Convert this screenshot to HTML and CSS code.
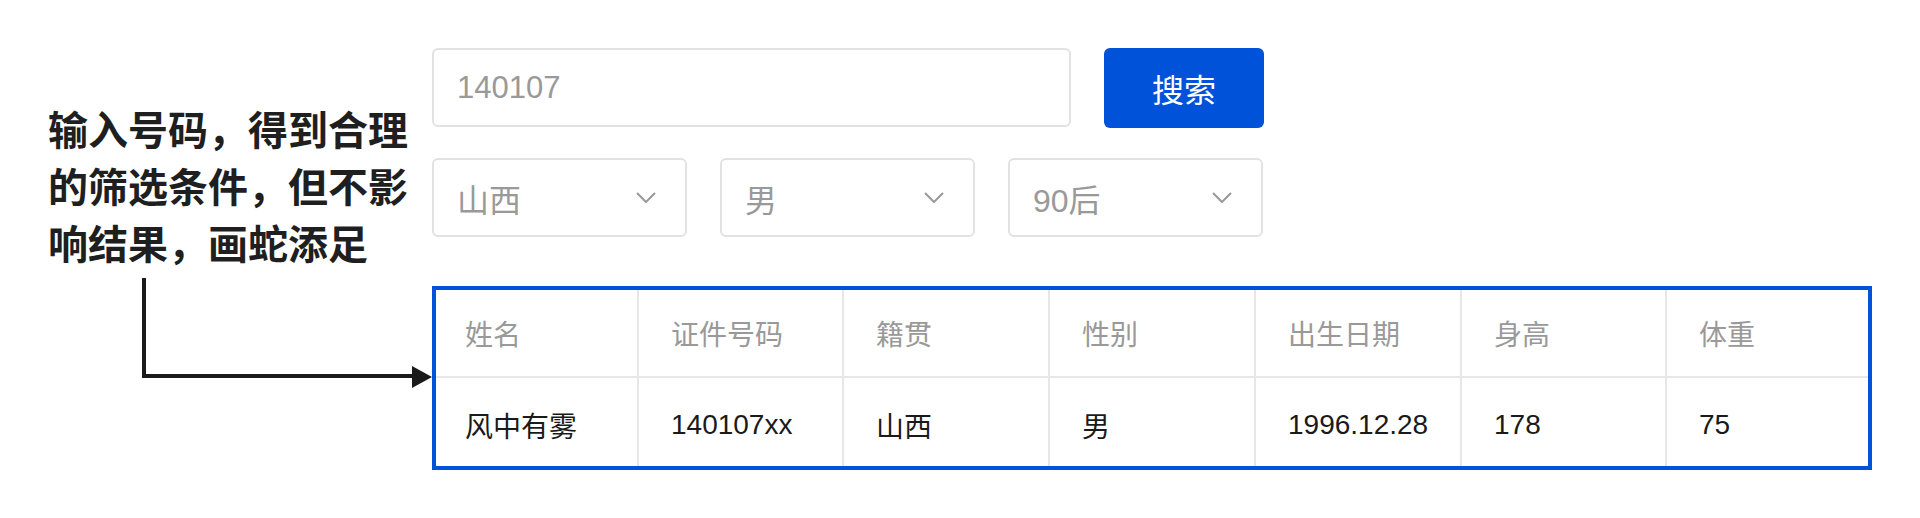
FILE: index.html
```html
<!DOCTYPE html>
<html lang="zh-CN">
<head>
<meta charset="utf-8">
<title>筛选示意</title>
<link rel="stylesheet" href="styles.css">
</head>
<body>
<div class="page">
  <aside class="note">
    <p class="note-text">输入号码，得到合理的筛选条件，但不影响结果，画蛇添足</p>
    <svg class="note-arrow" width="292" height="112" viewBox="0 0 292 112">
      <path d="M4 0 V98 H274" fill="none" stroke="#1a1a1a" stroke-width="4" stroke-linejoin="miter"/>
      <polygon points="272,88 292,99 272,110" fill="#1a1a1a"/>
    </svg>
  </aside>
  <main class="panel">
    <div class="search-row">
      <input class="search-input" type="text" value="140107">
      <button class="search-btn" type="button">搜索</button>
    </div>
    <div class="filter-row">
      <div class="select"><span>山西</span><svg class="chev" width="20" height="11" viewBox="0 0 20 11"><path d="M1 1 L10 10 L19 1" fill="none" stroke="#999" stroke-width="2"/></svg></div>
      <div class="select"><span>男</span><svg class="chev" width="20" height="11" viewBox="0 0 20 11"><path d="M1 1 L10 10 L19 1" fill="none" stroke="#999" stroke-width="2"/></svg></div>
      <div class="select"><span>90后</span><svg class="chev" width="20" height="11" viewBox="0 0 20 11"><path d="M1 1 L10 10 L19 1" fill="none" stroke="#999" stroke-width="2"/></svg></div>
    </div>
    <table class="result">
      <colgroup>
        <col class="c-first"><col class="c-mid"><col class="c-wide"><col class="c-wide"><col class="c-wide"><col class="c-mid"><col class="c-last">
      </colgroup>
      <thead>
        <tr><th>姓名</th><th>证件号码</th><th>籍贯</th><th>性别</th><th>出生日期</th><th>身高</th><th>体重</th></tr>
      </thead>
      <tbody>
        <tr><td>风中有雾</td><td>140107xx</td><td>山西</td><td>男</td><td>1996.12.28</td><td>178</td><td>75</td></tr>
      </tbody>
    </table>
  </main>
</div>
</body>
</html>
```

FILE: styles.css
```css
* { box-sizing: border-box; }
html, body { margin: 0; padding: 0; background: #fff; }
body { width: 1920px; height: 518px; overflow: hidden; }

.page {
  display: flex;
  align-items: flex-start;
}

.note {
  width: 432px;
  flex: none;
  padding: 100px 0 0 48px;
}
.note-text {
  margin: 0;
  width: 362px;
  font-family: "Noto Sans CJK SC", sans-serif;
  font-weight: 700;
  font-size: 40px;
  line-height: 57px;
  color: #1f1f1f;
}
.note-arrow {
  display: block;
  margin: 7px 0 0 92px;
}

.panel {
  padding-top: 48px;
  font-family: "Liberation Sans", "Noto Sans CJK SC", sans-serif;
}

.search-row {
  display: flex;
  gap: 33px;
}
.search-input {
  width: 639px;
  height: 79px;
  border: 2px solid #e2e2e2;
  border-radius: 6px;
  padding: 0 23px;
  font-family: inherit;
  font-size: 31px;
  color: #999;
  outline: none;
  background: #fff;
}
.search-btn {
  width: 160px;
  height: 80px;
  border: none;
  border-radius: 6px;
  background: #0052d9;
  color: #fff;
  font-family: inherit;
  font-size: 32px;
  padding: 0;
}

.filter-row {
  display: flex;
  gap: 33px;
  margin-top: 30px;
}
.select {
  width: 255px;
  height: 79px;
  border: 2px solid #e2e2e2;
  border-radius: 6px;
  padding: 0 29px 0 23px;
  display: flex;
  align-items: center;
  justify-content: space-between;
  font-size: 32px;
  color: #999;
}
.chev { display: block; }

.result {
  margin-top: 49px;
  width: 1440px;
  table-layout: fixed;
  border-collapse: separate;
  border-spacing: 0;
  border: 4px solid #0052d9;
  font-size: 28px;
}
.c-first { width: 203px; }
.c-mid { width: 205px; }
.c-wide { width: 206px; }
.c-last { width: 201px; }

.result th,
.result td {
  text-align: left;
  font-weight: 400;
  padding: 0 0 0 32px;
  border-right: 2px solid #e7e7e7;
}
.result th:first-child,
.result td:first-child { padding-left: 29px; }
.result th:last-child,
.result td:last-child { border-right: none; }
.result th {
  height: 88px;
  color: #999;
  border-bottom: 2px solid #e7e7e7;
}
.result td {
  height: 88px;
  padding-top: 5px;
  color: #1a1a1a;
}
```
